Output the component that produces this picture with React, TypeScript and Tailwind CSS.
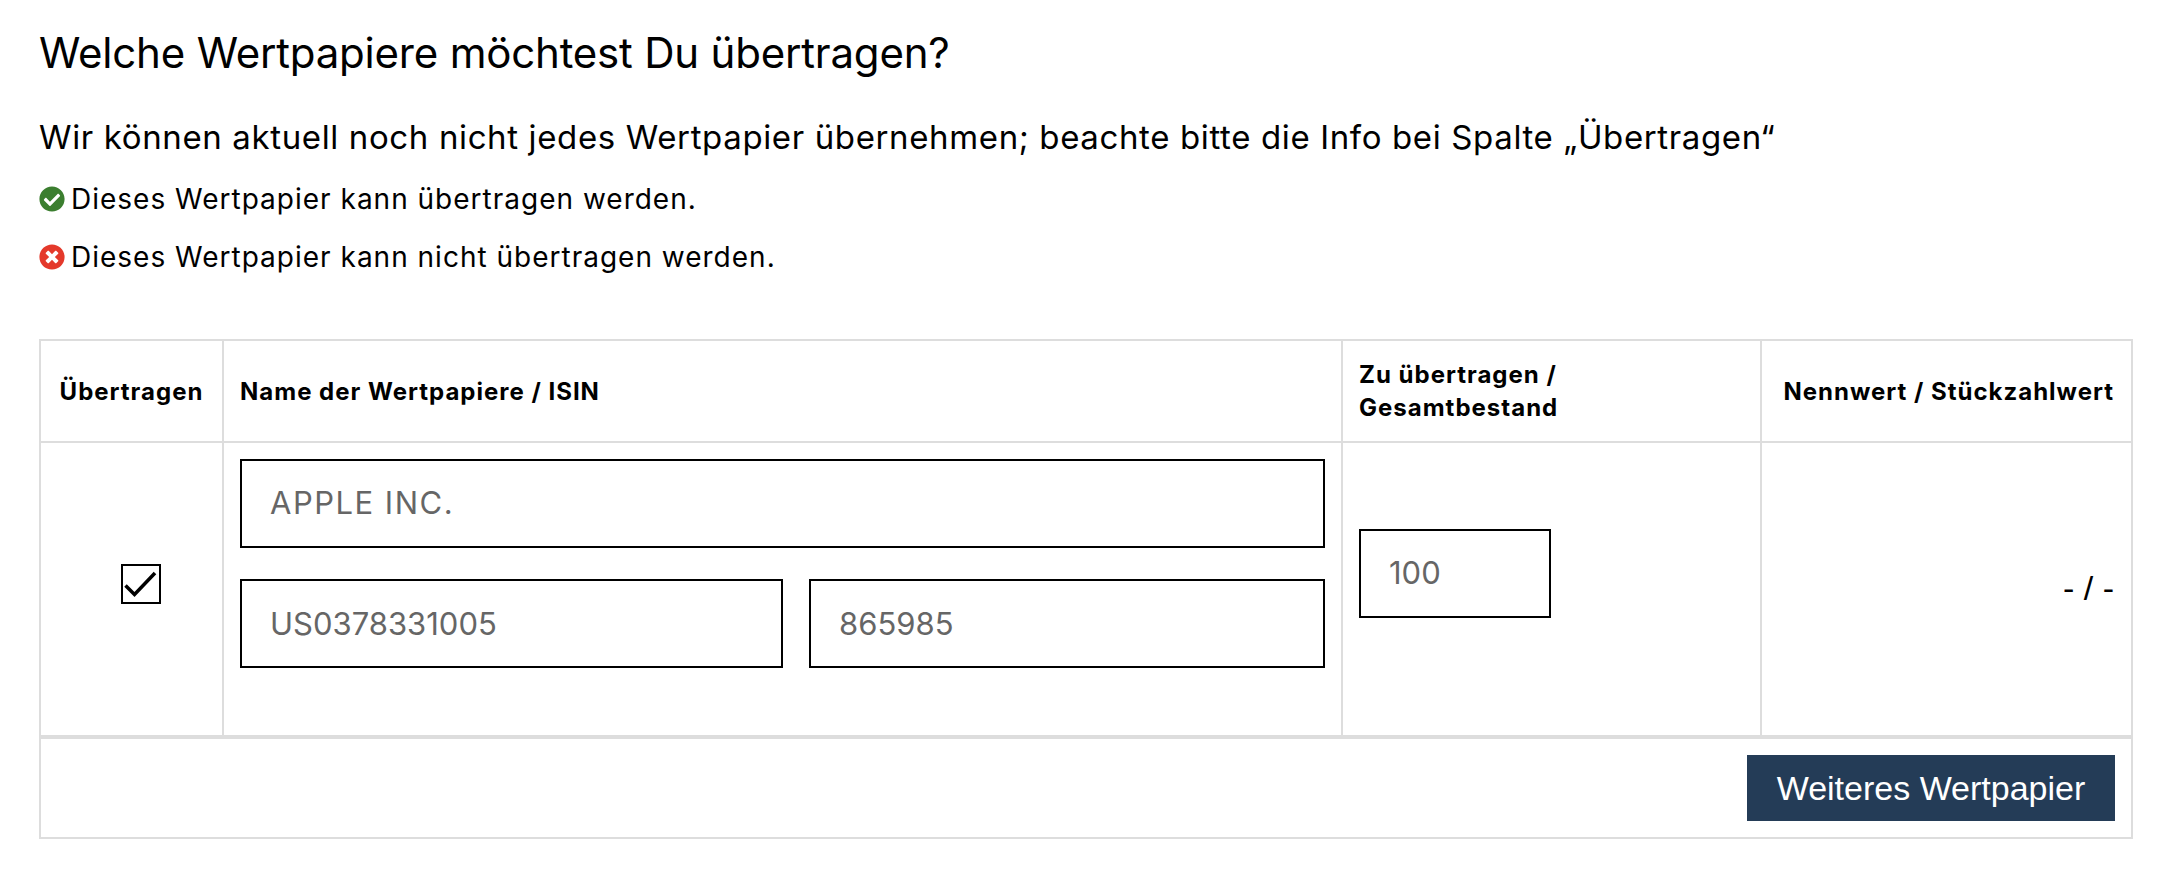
import { FaCheckCircle, FaTimesCircle } from 'react-icons/fa'

const font = "font-['Inter','Liberation_Sans',sans-serif]"

function Field({ value, className }: { value: string; className: string }) {
  return (
    <input
      readOnly
      value={value}
      className={`h-[89px] border-2 border-black pl-[28px] text-[31px] text-[#666] outline-none ${className}`}
    />
  )
}

export default function App() {
  return (
    <div className={`${font} min-h-screen bg-white pl-[39px] pr-[35px] pt-[28px] text-black`}>
      <h2 className="text-[42px] leading-[50px] tracking-[-0.2px]">Welche Wertpapiere möchtest Du übertragen?</h2>
      <p className="mt-[37px] text-[33px] leading-[44px] tracking-[0.63px]">
        Wir können aktuell noch nicht jedes Wertpapier übernehmen; beachte bitte die Info bei Spalte „Übertragen“
      </p>
      <div className="mt-[20px] flex h-[40px] items-center gap-[6px] text-[28px] tracking-[1px]">
        <FaCheckCircle className="h-[26px] w-[26px] text-[#3b7e2f]" />
        <span>Dieses Wertpapier kann übertragen werden.</span>
      </div>
      <div className="mt-[18px] flex h-[40px] items-center gap-[6px] text-[28px] tracking-[1px]">
        <FaTimesCircle className="h-[26px] w-[26px] text-[#e4392b]" />
        <span>Dieses Wertpapier kann nicht übertragen werden.</span>
      </div>

      <div className="mt-[62px] border-2 border-[#ddd]">
        <table className="w-full table-fixed border-collapse">
          <colgroup>
            <col className="w-[182px]" />
            <col className="w-[1119px]" />
            <col className="w-[419px]" />
            <col />
          </colgroup>
          <thead>
            <tr className="h-[101px] border-b-2 border-[#ddd] text-[24px] font-bold leading-[33px] tracking-[1px]">
              <th className="border-r-2 border-[#ddd] text-center">Übertragen</th>
              <th className="border-r-2 border-[#ddd] pl-[16px] text-left">Name der Wertpapiere / ISIN</th>
              <th className="border-r-2 border-[#ddd] pl-[16px] text-left">
                Zu übertragen /
                <br />
                Gesamtbestand
              </th>
              <th className="pr-[17px] text-right">Nennwert / Stückzahlwert</th>
            </tr>
          </thead>
          <tbody>
            <tr className="h-[293px]">
              <td className="border-r-2 border-[#ddd] pb-[11px]">
                <div className="ml-[80px] flex h-[40px] w-[40px] items-center justify-center border-2 border-black">
                  <svg viewBox="0 0 36 36" className="h-[36px] w-[36px]" fill="none" stroke="#000" strokeWidth="3.5">
                    <path d="M2.5 19.5 L11.5 28.5 L32 7" />
                  </svg>
                </div>
              </td>
              <td className="border-r-2 border-[#ddd] px-[16px] pb-[51px] pt-[16px] align-top">
                <Field value="APPLE INC." className="w-full pb-[3px] tracking-[1.5px]" />
                <div className="mt-[31px] flex gap-[26px]">
                  <Field value="US0378331005" className="w-[543px]" />
                  <Field value="865985" className="min-w-0 flex-1" />
                </div>
              </td>
              <td className="border-r-2 border-[#ddd] pl-[16px] pb-[31px]">
                <Field value="100" className="block w-[192px] pb-[2px]" />
              </td>
              <td className="pr-[17px] pb-[2px] text-right font-['Liberation_Sans',sans-serif] text-[34px]">- / -</td>
            </tr>
          </tbody>
        </table>
        <div className="flex justify-end border-t-[4px] border-[#ddd] px-[16px] py-[16px]">
          <button
            type="button"
            className="h-[66px] w-[368px] bg-[#243c57] font-['Liberation_Sans',sans-serif] text-[34px] text-white"
          >
            Weiteres Wertpapier
          </button>
        </div>
      </div>
    </div>
  )
}
